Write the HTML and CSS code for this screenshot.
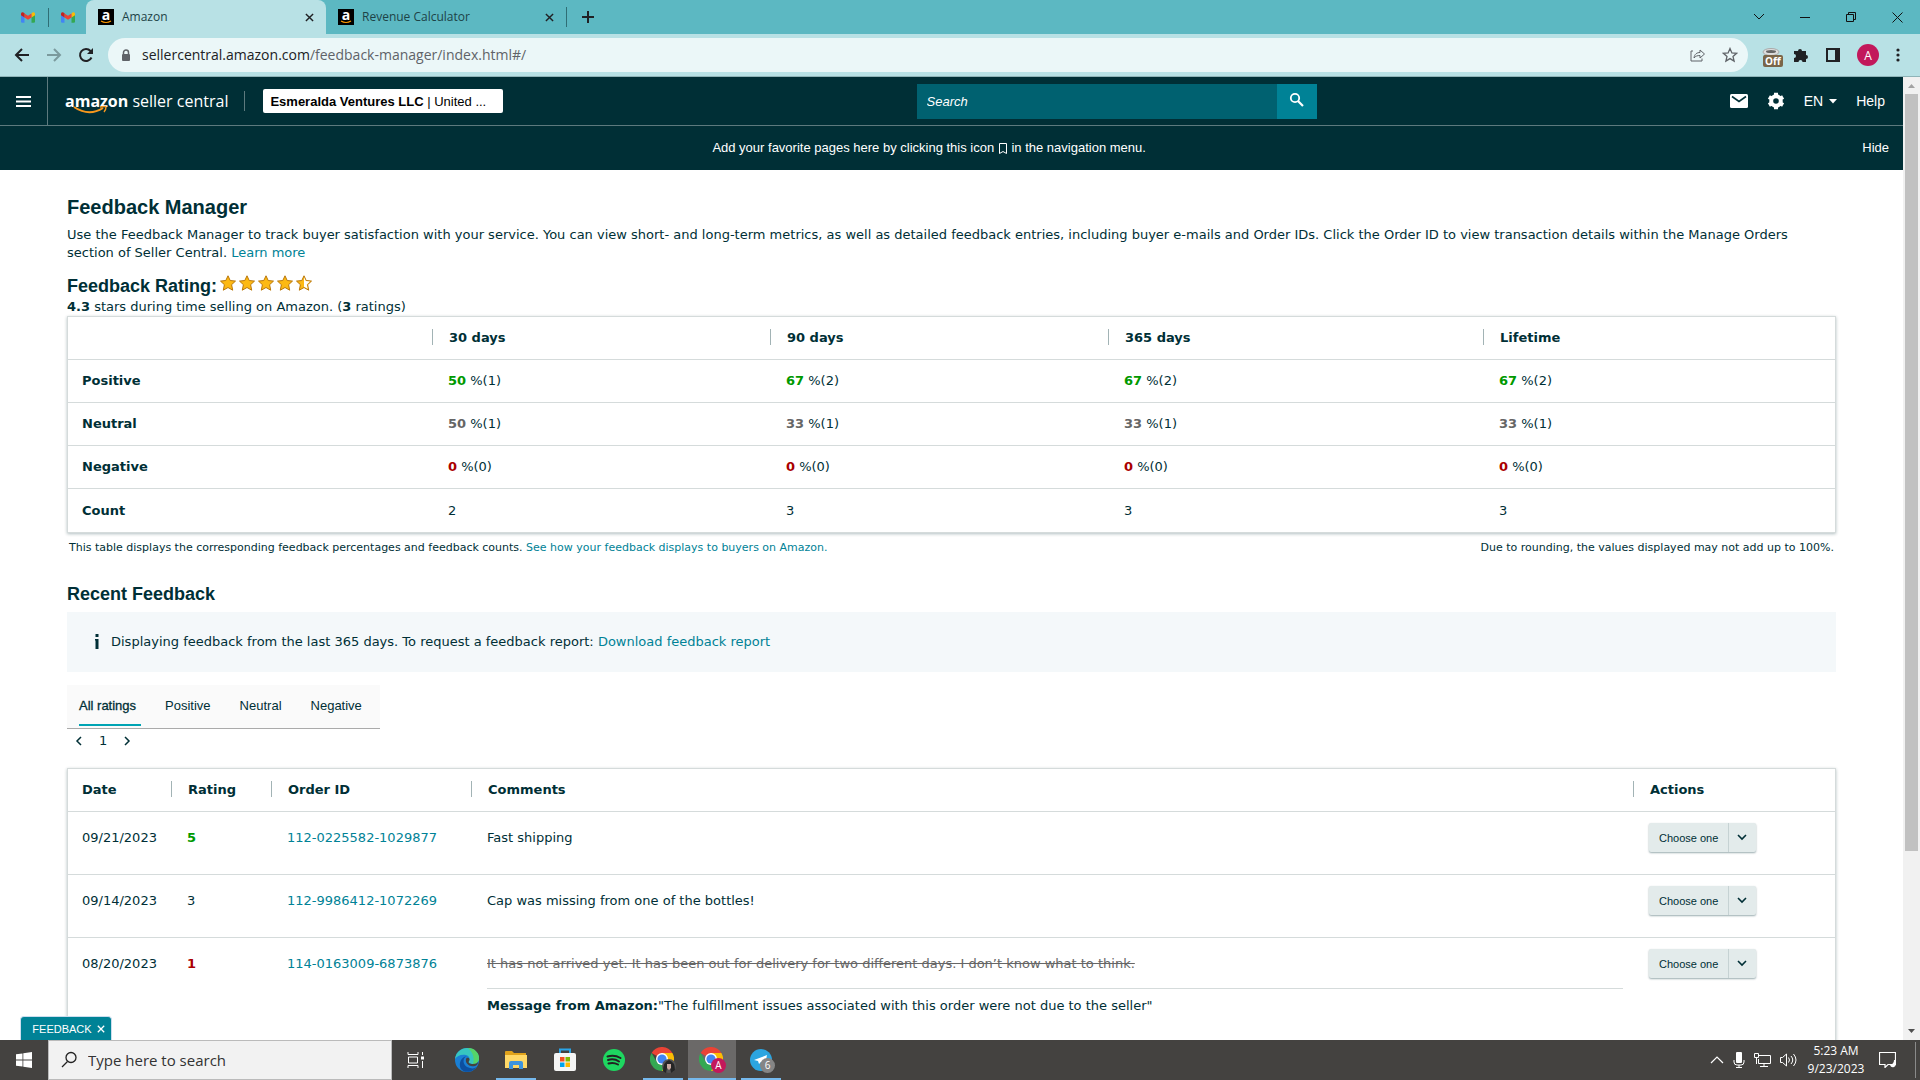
FILE: index.html
```
<!DOCTYPE html>
<html lang="en">
<head>
  <meta charset="UTF-8">
  <meta name="viewport" content="width=device-width, initial-scale=1.0">
  <title>Amazon</title>
  <link rel="stylesheet" href="styles.css">
</head>
<body>
  <svg width="0" height="0" class="defs" aria-hidden="true">
    <defs>
      <symbol id="gmail" viewBox="0 0 24 18">
        <path fill="#4285f4" d="M0 4v12a2 2 0 0 0 2 2h4V8z"/>
        <path fill="#34a853" d="M18 18h4a2 2 0 0 0 2-2V4l-6 4z"/>
        <path fill="#fbbc04" d="M18 2v7l6-4V3c0-3-3-4-5-2z"/>
        <path fill="#ea4335" d="M6 9V2l6 4 6-4v7l-6 4z"/>
        <path fill="#c5221f" d="M0 3v2l6 4V2L5 1C3-1 0 0 0 3z"/>
      </symbol>
      <symbol id="cross" viewBox="0 0 10 10">
        <path d="M1 1l8 8M9 1l-8 8" fill="none" stroke="currentColor" stroke-width="1.6"/>
      </symbol>
      <symbol id="chev-down" viewBox="0 0 12 8">
        <path d="M2 2l4 4 4-4" fill="none" stroke="currentColor" stroke-width="1.6"/>
      </symbol>
      <symbol id="star" viewBox="0 0 16 16">
        <path d="M8 .8l2.200 4.700 5.300.600-3.900 3.600 1.100 5.500L8 12.500l-4.700 2.700 1.100-5.500L.5 6.100l5.300-.6z" fill="#fdb913" stroke="#b9770b" stroke-linejoin="round"/>
      </symbol>
      <symbol id="chrome" viewBox="0 0 24 24">
        <path fill="#ea4335" d="M12 12L1.600 6a12 12 0 0 1 20.800 0z"/>
        <path fill="#fbbc04" d="M12 12V6h10.400A12 12 0 0 1 12 24z"/>
        <path fill="#34a853" d="M12 12l5.200 3L12 24A12 12 0 0 1 1.600 6L6.800 15z"/>
        <circle cx="12" cy="12" r="6" fill="#fff"/>
        <circle cx="12" cy="12" r="4.600" fill="#4285f4"/>
      </symbol>
    </defs>
  </svg>

  <!-- browser -->
  <header class="browser">
    <div class="tabstrip">
      <div class="pinned"><svg width="14" height="11"><use href="#gmail"/></svg></div>
      <div class="pinned pinned-last"><svg width="14" height="11"><use href="#gmail"/></svg></div>
      <div class="tab active">
        <span class="favicon">a<svg width="12" height="4" viewBox="0 0 12 4"><path d="M1 1q5 3 10 0" fill="none" stroke="#f90" stroke-width="1.200"/></svg></span>
        <span class="tab-title">Amazon</span>
        <button class="icon-btn" aria-label="Close tab"><svg width="9" height="9"><use href="#cross"/></svg></button>
      </div>
      <div class="tab">
        <span class="favicon">a<svg width="12" height="4" viewBox="0 0 12 4"><path d="M1 1q5 3 10 0" fill="none" stroke="#f90" stroke-width="1.200"/></svg></span>
        <span class="tab-title">Revenue Calculator</span>
        <button class="icon-btn" aria-label="Close tab"><svg width="9" height="9"><use href="#cross"/></svg></button>
      </div>
      <button class="icon-btn new-tab" aria-label="New tab"><svg width="14" height="14" viewBox="0 0 14 14"><path d="M7 1v12M1 7h12" stroke="#202124" stroke-width="2"/></svg></button>
      <div class="window-btns">
        <button class="icon-btn" aria-label="Search tabs"><svg width="12" height="8" viewBox="0 0 12 8"><path d="M1 1l5 5 5-5" fill="none" stroke="#111"/></svg></button>
        <button class="icon-btn" aria-label="Minimize"><svg width="10" height="10" viewBox="0 0 10 10"><path d="M0 5.500h10" stroke="#111"/></svg></button>
        <button class="icon-btn" aria-label="Restore"><svg width="10" height="10" viewBox="0 0 10 10"><path d="M.5 2.500h7v7h-7zM2.500 2.500v-2h7v7h-2" fill="none" stroke="#111"/></svg></button>
        <button class="icon-btn" aria-label="Close"><svg width="11" height="11" viewBox="0 0 11 11"><path d="M.5.5l10 10M10.500.5l-10 10" stroke="#111"/></svg></button>
      </div>
    </div>
    <div class="toolbar">
      <button class="icon-btn" aria-label="Back"><svg width="16" height="16" viewBox="0 0 16 16"><path d="M15 8H2M8 2L2 8l6 6" fill="none" stroke="#202124" stroke-width="2"/></svg></button>
      <button class="icon-btn" aria-label="Forward"><svg width="16" height="16" viewBox="0 0 16 16"><path d="M1 8h13M8 2l6 6-6 6" fill="none" stroke="#7b9a9d" stroke-width="2"/></svg></button>
      <button class="icon-btn" aria-label="Reload"><svg width="16" height="16" viewBox="0 0 16 16"><path d="M13.500 10.500A6 6 0 1 1 12.500 4l1 1" fill="none" stroke="#202124" stroke-width="2"/><path d="M15 1v6H9z" fill="#202124"/></svg></button>
      <div class="address">
        <svg width="10" height="13" viewBox="0 0 10 13"><path d="M2.500 5V3.500a2.500 2.500 0 0 1 5 0V5" fill="none" stroke="#5f6368" stroke-width="1.500"/><rect x="1" y="5" width="8" height="7" rx="1" fill="#5f6368"/></svg>
        <a href="#/" class="url">sellercentral.amazon.com<span>/feedback-manager/index.html#/</span></a>
        <button class="icon-btn" aria-label="Share"><svg width="16" height="14" viewBox="0 0 16 14"><path d="M3 3H1v10h11v-2.500M4 10c.5-4 3-5.500 6-5.500V2l4.500 4L10 10V7.500C7.500 7.500 5.500 8 4 10z" fill="none" stroke="#5f6368"/></svg></button>
        <button class="icon-btn" aria-label="Bookmark"><svg width="16" height="16" viewBox="0 0 16 16"><path d="M8 1.500l1.900 4.400 4.700.400-3.600 3.100 1.100 4.700L8 11.600l-4.100 2.500L5 9.400 1.400 6.300l4.700-.4z" fill="none" stroke="#5f6368" stroke-width="1.300"/></svg></button>
      </div>
      <div class="extensions">
        <button class="icon-btn ext-off" aria-label="Extension"><svg width="18" height="14" viewBox="0 0 18 14"><ellipse cx="9" cy="4" rx="8" ry="3.500" fill="#ddd" stroke="#aaa"/><ellipse cx="9" cy="3.500" rx="5" ry="1.500" fill="#666"/><path d="M3 7v5" stroke="#999" stroke-width="2"/></svg><span class="off">Off</span></button>
        <button class="icon-btn" aria-label="Extensions"><svg width="16" height="16" viewBox="0 0 16 16"><path d="M1 4h4a2 2 0 1 1 4 0h4v4a2 2 0 1 1 0 4v3H9.500a2 2 0 1 0-4 0H1v-4a2 2 0 1 0 0-4z" fill="#202124"/></svg></button>
        <button class="icon-btn" aria-label="Side panel"><svg width="14" height="14" viewBox="0 0 14 14"><path d="M1 1h12v12H1z" fill="none" stroke="#202124" stroke-width="2"/><path d="M9 1h4v12H9z" fill="#202124"/></svg></button>
        <button class="avatar">A</button>
        <button class="icon-btn" aria-label="Menu"><svg width="4" height="14" viewBox="0 0 4 14" fill="#202124"><circle cx="2" cy="2" r="1.600"/><circle cx="2" cy="7" r="1.600"/><circle cx="2" cy="12" r="1.600"/></svg></button>
      </div>
    </div>
  </header>

  <div class="viewport">
    <div class="page">
      <!-- seller central nav -->
      <nav class="topnav">
        <button class="icon-btn burger" aria-label="Open menu"><svg width="15" height="11" viewBox="0 0 15 11"><path d="M0 1h15M0 5.500h15M0 10h15" stroke="#fff" stroke-width="2"/></svg></button>
        <a href="#/" class="logo"><b>amazon</b> seller central
          <svg width="36" height="8" viewBox="0 0 36 8"><path d="M1 1q15 10 29 1" fill="none" stroke="#f7981d" stroke-width="2"/><path d="M27 1q5-1 6 0 0 3-2 5" fill="none" stroke="#f7981d" stroke-width="1.400"/></svg>
        </a>
        <button class="account"><b>Esmeralda Ventures LLC</b> | United ...</button>
        <form class="search">
          <input type="text" placeholder="Search" aria-label="Search">
          <button type="button" aria-label="Search"><svg width="16" height="16" viewBox="0 0 16 16"><circle cx="6" cy="6" r="4.200" fill="none" stroke="#fff" stroke-width="1.800"/><path d="M9 9l5 5" stroke="#fff" stroke-width="2.200"/></svg></button>
        </form>
        <div class="nav-links">
          <a href="#/" aria-label="Messages"><svg width="18" height="14" viewBox="0 0 18 14"><rect width="18" height="14" rx="1.500" fill="#fff"/><path d="M2 2.500l7 5 7-5" fill="none" stroke="#002f36" stroke-width="1.600"/></svg></a>
          <a href="#/" aria-label="Settings"><svg width="18" height="18" viewBox="0 0 18 18"><circle cx="9" cy="9" r="4.800" fill="none" stroke="#fff" stroke-width="4"/><path d="M9 .8v3M9 14.200v3M1.900 4.900l2.600 1.500M13.500 11.600l2.600 1.500M1.900 13.100l2.600-1.500M13.500 6.400l2.600-1.500" stroke="#fff" stroke-width="4"/></svg></a>
          <a href="#/" class="lang">EN <svg width="8" height="5" viewBox="0 0 8 5"><path d="M0 0h8L4 4.500z" fill="#fff"/></svg></a>
          <a href="#/">Help</a>
        </div>
      </nav>
      <div class="favbar">
        <p>Add your favorite pages here by clicking this icon <svg width="10" height="11" viewBox="0 0 10 11"><path d="M1.500.5h7v10L5 8.500l-3.500 2z" fill="none" stroke="#fff"/></svg> in the navigation menu.</p>
        <a href="#/">Hide</a>
      </div>

      <main class="content">
        <h1>Feedback Manager</h1>
        <p class="intro">Use the Feedback Manager to track buyer satisfaction with your service. You can view short- and long-term metrics, as well as detailed feedback entries, including buyer e-mails and Order IDs. Click the Order ID to view transaction details within the Manage Orders section of Seller Central. <a href="#/">Learn more</a></p>

        <h2 class="rating-title">Feedback Rating:
          <span class="stars">
            <svg width="16" height="16"><use href="#star"/></svg>
            <svg width="16" height="16"><use href="#star"/></svg>
            <svg width="16" height="16"><use href="#star"/></svg>
            <svg width="16" height="16"><use href="#star"/></svg>
            <svg width="16" height="16" viewBox="0 0 16 16"><use href="#star" width="16" height="16"/><path d="M8 2.300l1.800 3.800 4.200.500-3.200 2.800.9 4.400L8 11.700z" fill="#fff"/></svg>
          </span>
        </h2>
        <p class="summary"><b>4.3</b> stars during time selling on Amazon. (<b>3</b> ratings)</p>

        <table class="grid ratings">
          <colgroup><col class="c-label"><col class="c-30"><col class="c-90"><col class="c-365"><col></colgroup>
          <thead>
            <tr><th></th><th>30 days</th><th>90 days</th><th>365 days</th><th>Lifetime</th></tr>
          </thead>
          <tbody>
            <tr class="pos"><th>Positive</th><td><b>50</b> %(1)</td><td><b>67</b> %(2)</td><td><b>67</b> %(2)</td><td><b>67</b> %(2)</td></tr>
            <tr class="neu"><th>Neutral</th><td><b>50</b> %(1)</td><td><b>33</b> %(1)</td><td><b>33</b> %(1)</td><td><b>33</b> %(1)</td></tr>
            <tr class="neg"><th>Negative</th><td><b>0</b> %(0)</td><td><b>0</b> %(0)</td><td><b>0</b> %(0)</td><td><b>0</b> %(0)</td></tr>
            <tr><th>Count</th><td>2</td><td>3</td><td>3</td><td>3</td></tr>
          </tbody>
        </table>
        <div class="notes">
          <p>This table displays the corresponding feedback percentages and feedback counts. <a href="#/">See how your feedback displays to buyers on Amazon.</a></p>
          <p>Due to rounding, the values displayed may not add up to 100%.</p>
        </div>

        <h2 class="recent-title">Recent Feedback</h2>
        <div class="alert">
          <svg width="6" height="16" viewBox="0 0 6 16"><path d="M1.500 0h3v3h-3zM1 5h3.500v10h-3V6.500H1z" fill="#002f36"/></svg>
          <p>Displaying feedback from the last 365 days. To request a feedback report: <a href="#/">Download feedback report</a></p>
        </div>

        <div class="filters">
          <a href="#/" class="current">All ratings</a>
          <a href="#/">Positive</a>
          <a href="#/">Neutral</a>
          <a href="#/">Negative</a>
        </div>
        <div class="pager">
          <button class="icon-btn" aria-label="Previous page"><svg width="8" height="12" viewBox="0 0 8 12"><path d="M6 2L2 6l4 4" fill="none" stroke="#002f36" stroke-width="1.500"/></svg></button>
          <span>1</span>
          <button class="icon-btn" aria-label="Next page"><svg width="8" height="12" viewBox="0 0 8 12"><path d="M2 2l4 4-4 4" fill="none" stroke="#002f36" stroke-width="1.500"/></svg></button>
        </div>

        <table class="grid feedback">
          <colgroup><col class="c-date"><col class="c-rating"><col class="c-order"><col><col class="c-actions"></colgroup>
          <thead>
            <tr><th>Date</th><th>Rating</th><th>Order ID</th><th>Comments</th><th>Actions</th></tr>
          </thead>
          <tbody>
            <tr class="pos">
              <td>09/21/2023</td><td><b>5</b></td><td><a href="#/">112-0225582-1029877</a></td><td>Fast shipping</td>
              <td><div class="choose"><select aria-label="Action for 112-0225582-1029877"><option>Choose one</option></select><svg width="12" height="8"><use href="#chev-down"/></svg></div></td>
            </tr>
            <tr>
              <td>09/14/2023</td><td>3</td><td><a href="#/">112-9986412-1072269</a></td><td>Cap was missing from one of the bottles!</td>
              <td><div class="choose"><select aria-label="Action for 112-9986412-1072269"><option>Choose one</option></select><svg width="12" height="8"><use href="#chev-down"/></svg></div></td>
            </tr>
            <tr class="neg">
              <td>08/20/2023</td><td><b>1</b></td><td><a href="#/">114-0163009-6873876</a></td>
              <td><s>It has not arrived yet. It has been out for delivery for two different days. I don’t know what to think.</s>
                <p class="message"><strong>Message from Amazon:</strong>"The fulfillment issues associated with this order were not due to the seller"</p></td>
              <td><div class="choose"><select aria-label="Action for 114-0163009-6873876"><option>Choose one</option></select><svg width="12" height="8"><use href="#chev-down"/></svg></div></td>
            </tr>
          </tbody>
        </table>
      </main>
      <button class="feedback-tab">FEEDBACK <svg width="8" height="8"><use href="#cross"/></svg></button>
    </div>

    <div class="scrollbar">
      <svg width="17" height="17" viewBox="0 0 17 17"><path d="M5 11h7L8.500 7z" fill="#a3a3a3"/></svg>
      <div class="thumb"></div>
      <svg width="17" height="17" viewBox="0 0 17 17"><path d="M5 6h7l-3.500 4z" fill="#505050"/></svg>
    </div>
  </div>

  <!-- windows taskbar -->
  <footer class="taskbar">
    <button class="start" aria-label="Start"><svg width="16" height="16" viewBox="0 0 16 16" fill="#fff"><path d="M0 2.300L6.500 1.400v6.200H0zM7.300 1.300L16 0v7.600H7.300zM0 8.400h6.500v6.200L0 13.700zM7.300 8.400H16V16l-8.700-1.300z"/></svg></button>
    <label class="find">
      <svg width="18" height="18" viewBox="0 0 18 18"><circle cx="11" cy="6.500" r="5" fill="none" stroke="#222" stroke-width="1.300"/><path d="M7.500 10.500L2 16" stroke="#222" stroke-width="1.300"/></svg>
      <input type="text" placeholder="Type here to search">
    </label>
    <div class="apps">
      <button class="task-view" aria-label="Task View"><svg width="18" height="16" viewBox="0 0 18 16" fill="none" stroke="#fff"><path d="M1 0v2.500h10V0M1 16v-2.500h10V16M1.500 5h9v6h-9zM15.500 0v3M15.500 9v7"/><path d="M14 4.500h3v3h-3z" fill="#fff" stroke="none"/></svg></button>
      <button aria-label="Edge"><svg width="24" height="24" viewBox="0 0 24 24"><circle cx="12" cy="12" r="12" fill="#1a7fd4"/><path d="M0 11C1 4 6 0 12 0c7 0 12 5 12 10 0 4-3 6-6 6-3 0-5-1-4-3 1-1 1-5-3-6C6 6 2 8 0 11z" fill="#37c6c0"/><path d="M13 0c7 0 11 5 11 10 0 4-3 6-6 6 2-8-1-12-5-16z" fill="#55d469"/><path d="M12 8c-5 2-5 10 3 12 3 1 6 0 7-2-3 6-12 8-16 3C3 16 6 9 12 8z" fill="#0c4fa0"/><path d="M11.500 10c2-1 4 1 2.500 3s1 3 4 3 4-1 5-2c0 4-4 5-7 4-5-1-6-6-4.500-8z" fill="#444240"/></svg></button>
      <button class="open" aria-label="File Explorer"><svg width="22" height="18" viewBox="0 0 22 18"><path d="M0 1a1 1 0 0 1 1-1h6l2 2h12v4H0z" fill="#e0a21b"/><path d="M0 4h22v13H0z" fill="#ffd867"/><path d="M4 18v-6q0-2 2-2h10q2 0 2 2v6h-4v-4H8v4z" fill="#3d94de"/></svg></button>
      <button aria-label="Store"><svg width="22" height="24" viewBox="0 0 22 24"><path d="M6 6V1.500h10V6" fill="none" stroke="#2aa5e8" stroke-width="2"/><rect y="5" width="22" height="18" rx="2" fill="#f5f5f5"/><path fill="#f25022" d="M6 9h4.500v4.500H6z"/><path fill="#7fba00" d="M11.500 9H16v4.500h-4.500z"/><path fill="#00a4ef" d="M6 14.500h4.500V19H6z"/><path fill="#ffb900" d="M11.500 14.500H16V19h-4.500z"/></svg></button>
      <button aria-label="Spotify"><svg width="22" height="22" viewBox="0 0 22 22"><circle cx="11" cy="11" r="11" fill="#1ed760"/><path d="M4.500 7.500q7-2 13 1.500M5 11q6-2 11 1.500M5.500 14.500q5-1.500 9.500 1" fill="none" stroke="#222" stroke-width="2" stroke-linecap="round"/></svg></button>
      <button class="open" aria-label="Chrome"><svg width="26" height="26" viewBox="0 0 26 26"><use href="#chrome" width="24" height="24"/><circle cx="19" cy="19" r="7" fill="#555"/><path d="M13 24q0-9 6-11 6 2 6 10l-4 3-1-6-3 1-1 5z" fill="#262626"/><path d="M17 17h4v4l-2 2-2-2z" fill="#c9a9a0"/></svg></button>
      <button class="open focus" aria-label="Chrome profile A"><svg width="26" height="26" viewBox="0 0 26 26"><use href="#chrome" width="24" height="24"/></svg><span class="badge pink">A</span></button>
      <button class="open" aria-label="Telegram"><svg width="22" height="22" viewBox="0 0 22 22"><circle cx="11" cy="11" r="11" fill="#2ca5e0"/><path d="M4 11l13-5-2 10-4-3-2 2-1-3z" fill="#fff"/></svg><span class="badge grey">6</span></button>
    </div>
    <div class="tray">
      <svg width="14" height="8" viewBox="0 0 14 8"><path d="M1 7l6-6 6 6" fill="none" stroke="#fff" stroke-width="1.200"/></svg>
      <svg width="12" height="16" viewBox="0 0 12 16"><rect x="3" width="6" height="11" rx="1" fill="#fff"/><path d="M1 8v2q0 3 3 3h4q3 0 3-3V8M6 13v2.500M3 15.500h6" fill="none" stroke="#fff"/></svg>
      <svg width="17" height="14" viewBox="0 0 17 14" fill="none" stroke="#fff"><path d="M5 2.500h11.500v8H4.500V6M10 11v2.500M6 13.500h8M.5.500h4v4h-4zM2.500 5v6"/></svg>
      <svg width="17" height="14" viewBox="0 0 17 14" fill="none" stroke="#fff"><path d="M.5 4.500h2l4-3.500v12L2.500 9.500h-2zM8.500 4.500q2 2.500 0 5M11 3q3.500 4 0 8M13.500 1q5 6 0 12"/></svg>
      <div class="clock"><div>5:23 AM</div><div>9/23/2023</div></div>
      <svg width="17" height="16" viewBox="0 0 17 16"><path d="M.5.500h16v12H9l-3 3v-3H.5z" fill="none" stroke="#fff" stroke-width="1.200"/><path d="M15 8q0 4-4 5 1 3 4 2t1-7z" fill="#fff"/></svg>
    </div>
  </footer>
</body>
</html>
```

FILE: styles.css
```
* {
  box-sizing: border-box;
}
body {
  margin: 0;
  height: 100vh;
  display: flex;
  flex-direction: column;
  overflow: hidden;
  font-family: "DejaVu Sans", Verdana, sans-serif;
  font-size: 13px;
  line-height: 18px;
  color: #002f36;
  background: #fff;
}
h1, h2, p {
  margin: 0;
}
a {
  color: #008296;
  text-decoration: none;
}
button, input, select {
  font-family: inherit;
  border: 0;
  padding: 0;
  margin: 0;
  background: none;
}
svg {
  flex: none;
}
.defs {
  position: absolute;
}
.icon-btn {
  display: flex;
  align-items: center;
  justify-content: center;
  color: #202124;
}

/* browser */
.browser {
  flex: none;
  font-family: "Open Sans", "Noto Sans", sans-serif;
  background: #5cb8c2;
}
.tabstrip {
  display: flex;
  align-items: center;
  height: 34px;
  font-size: 12px;
}
.pinned {
  display: flex;
  justify-content: center;
  width: 49px;
  padding: 4px 0 4px 8px;
  border-right: 1px solid #2f6e75;
}
.pinned-last {
  width: 37px;
  padding-left: 0;
  border: 0;
}
.tab {
  display: flex;
  align-items: center;
  gap: 8px;
  width: 240px;
  height: 34px;
  padding: 0 12px;
  color: #1d4347;
}
.tab.active {
  background: #b8e1e5;
  border-radius: 8px 8px 0 0;
}
.tab-title {
  flex: 1;
}
.favicon {
  display: flex;
  flex-direction: column;
  align-items: center;
  width: 16px;
  height: 16px;
  background: #000;
  color: #fff;
  font-weight: bold;
  font-size: 14px;
  line-height: 11px;
}
.new-tab {
  height: 20px;
  padding-left: 14px;
  border-left: 1px solid #2f6e75;
}
.window-btns {
  display: flex;
  margin-left: auto;
}
.window-btns .icon-btn {
  width: 46px;
  height: 28px;
}
.toolbar {
  display: flex;
  align-items: center;
  height: 43px;
  padding: 0 20px 0 14px;
  gap: 16px;
  background: #b8e1e5;
  border-bottom: 1px solid #8fb4b8;
}
.address {
  flex: 1;
  display: flex;
  align-items: center;
  gap: 16px;
  height: 34px;
  margin-left: -2px;
  padding: 0 10px 0 13px;
  border-radius: 17px;
  background: #ebf7f8;
}
.url {
  flex: 1;
  margin-left: -5px;
  font-size: 14px;
  color: #202124;
}
.url span {
  color: #5f6368;
}
.extensions {
  display: flex;
  align-items: center;
  gap: 17px;
  margin-left: -4px;
}
.ext-off {
  position: relative;
  width: 22px;
  height: 22px;
  margin-right: -6px;
}
.off {
  position: absolute;
  left: 3px;
  top: 11px;
  padding: 0 2px;
  border-radius: 2px;
  background: #7a6548;
  color: #fff;
  font: bold 10px/12px "Open Sans", sans-serif;
}
.avatar {
  width: 22px;
  height: 22px;
  border-radius: 50%;
  background: #c2185b;
  color: #fff;
  font-size: 12px;
}

/* page area */
.viewport {
  flex: 1;
  min-height: 0;
  display: flex;
}
.page {
  position: relative;
  flex: 1;
  overflow: hidden;
}
.scrollbar {
  width: 17px;
  display: flex;
  flex-direction: column;
  background: #f1f1f1;
}
.thumb {
  flex: 0 0 calc(100% * 11 / 14);
  margin: 0 2px auto;
  background: #c1c1c1;
}

.topnav {
  display: flex;
  align-items: center;
  height: 49px;
  border-bottom: 1px solid #5d7a7e;
  background: #002f36;
  font-family: "Liberation Sans", Arial, sans-serif;
  color: #fff;
}
.burger {
  width: 48px;
  height: 48px;
  border-right: 1px solid #5d7a7e;
}
.logo {
  position: relative;
  margin-left: 17px;
  padding-right: 16px;
  border-right: 1px solid #5d7a7e;
  font-family: "Open Sans", sans-serif;
  font-size: 16px;
  line-height: 20px;
  color: #fff;
}
.logo svg {
  position: absolute;
  left: 8px;
  top: 15px;
}
.account {
  width: 240px;
  height: 24px;
  margin-left: 18px;
  padding-left: 7px;
  border-radius: 2px;
  background: #fff;
  color: #000;
  font-size: 13px;
  text-align: left;
}
.search {
  display: flex;
  width: 400px;
  height: 35px;
  margin: 0 auto;
}
.search input {
  flex: 1;
  padding: 0 10px;
  background: #006170;
  font-size: 13px;
}
.search input::placeholder {
  color: #fff;
  font-style: italic;
  opacity: 1;
}
.search button {
  width: 40px;
  background: #008296;
}
.nav-links {
  display: flex;
  align-items: center;
  gap: 19px;
  padding-right: 18px;
  font-size: 14px;
}
.nav-links a {
  display: flex;
  align-items: center;
  gap: 6px;
  color: #fff;
}
.favbar {
  display: flex;
  align-items: center;
  height: 44px;
  padding: 0 14px;
  background: #002f36;
  color: #fff;
  font-family: "Liberation Sans", Arial, sans-serif;
}
.favbar p {
  flex: 1;
  padding-right: 18px;
  text-align: center;
}
.favbar p svg {
  vertical-align: -2px;
}
.favbar a {
  color: #fff;
}

/* feedback manager */
.content {
  padding: 24px 67px 0;
}
h1, h2 {
  font-family: "Liberation Sans", Arial, sans-serif;
  font-size: 18px;
  line-height: 26px;
}
h1 {
  font-size: 20px;
}
.intro {
  margin-top: 6px;
}
.rating-title {
  display: flex;
  gap: 3px;
  margin-top: 13px;
  line-height: 23px;
}
.stars {
  display: flex;
  gap: 3px;
}
.grid {
  width: 100%;
  table-layout: fixed;
  border-collapse: separate;
  border-spacing: 0;
  border: 1px solid #d5dbdb;
  box-shadow: 0 1px 3px rgba(0, 47, 54, 0.3);
}
.grid th {
  position: relative;
  text-align: left;
}
.grid th, .grid td {
  height: 43px;
  padding: 0 14px;
  border-bottom: 1px solid #d5dbdb;
}
.grid tr > * + * {
  padding-left: 16px;
}
.grid thead th + th {
  padding-left: 17px;
}
.grid tbody tr:last-child > * {
  border-bottom: 0;
}
.grid thead th + th::before {
  content: "";
  position: absolute;
  left: 0;
  top: 12px;
  height: 16px;
  border-left: 1px solid #a2b3b5;
}
.c-label {
  width: 364px;
}
.c-30, .c-90 {
  width: 338px;
}
.c-365 {
  width: 375px;
}
.pos b {
  color: #090;
}
.neu b {
  color: #666;
}
.neg b {
  color: #a00;
}
.notes {
  display: flex;
  justify-content: space-between;
  padding: 6px 2px 0;
  font-size: 11px;
}
.recent-title {
  margin-top: 24px;
}
.alert {
  display: flex;
  align-items: center;
  gap: 11px;
  height: 60px;
  margin-top: 5px;
  padding-left: 27px;
  background: #f4f8fa;
}
.filters {
  display: inline-flex;
  gap: 24px;
  height: 44px;
  margin-top: 13px;
  padding: 0 13px 0 12px;
  border-bottom: 1px solid #aaa;
  background: #fafafa;
  font-family: "Liberation Sans", Arial, sans-serif;
  vertical-align: top;
}
.filters a {
  height: 41px;
  padding: 12px 5px 0 0;
  color: #002f36;
}
.filters .current {
  border-bottom: 2px solid #00a4b4;
  -webkit-text-stroke: 0.3px;
}
.pager {
  display: flex;
  align-items: center;
  gap: 16px;
  height: 24px;
  padding-left: 8px;
}
.feedback {
  margin-top: 15px;
}
.feedback tbody td {
  height: 63px;
  padding-top: 11px;
  line-height: 29px;
  vertical-align: top;
}
.c-date {
  width: 103px;
}
.c-rating {
  width: 100px;
}
.c-order {
  width: 200px;
}
.c-actions {
  width: 202px;
}
s {
  color: #666;
}
.message {
  padding: 8px 0 30px;
  margin-top: 10px;
  border-top: 1px solid #d5dbdb;
  line-height: 18px;
}
.feedback td:nth-child(4) {
  padding-right: 10px;
}
.choose {
  position: relative;
  width: 107px;
}
.choose select {
  display: block;
  width: 100%;
  height: 29px;
  padding: 0 36px 0 10px;
  border-radius: 2px;
  appearance: none;
  background: linear-gradient(#c6d2d3, #c6d2d3) 79px 0 / 1px 100% no-repeat #e3ebeb;
  box-shadow: 0 1px 2px rgba(0, 47, 54, 0.4);
  color: #002f36;
  font-family: "Liberation Sans", Arial, sans-serif;
  font-size: 11px;
}
.choose svg {
  position: absolute;
  right: 8px;
  top: 10px;
  pointer-events: none;
}
.feedback-tab {
  position: absolute;
  left: 20px;
  bottom: 0;
  display: flex;
  align-items: center;
  justify-content: center;
  gap: 5px;
  width: 92px;
  height: 24px;
  padding-left: 5px;
  border: 1px solid #cde;
  border-bottom: 0;
  border-radius: 4px 4px 0 0;
  background: #008296;
  color: #fff;
  font-family: "Liberation Sans", Arial, sans-serif;
  font-size: 11px;
}

/* taskbar */
.taskbar {
  flex: none;
  display: flex;
  align-items: center;
  height: 40px;
  background: #444240;
  color: #fff;
  font-family: "Open Sans", "Noto Sans", sans-serif;
}
.start {
  width: 48px;
  height: 40px;
  padding-top: 4px;
}
.find {
  display: flex;
  align-items: center;
  gap: 10px;
  width: 344px;
  height: 40px;
  padding-left: 11px;
  border: 1px solid #bbb;
  background: #f2f2f2;
}
.find input {
  flex: 1;
  font-size: 15px;
}
.find input::placeholder {
  color: #333;
  opacity: 1;
}
.apps {
  display: flex;
  gap: 1px;
}
.apps button {
  position: relative;
  display: flex;
  align-items: center;
  justify-content: center;
  width: 48px;
  height: 40px;
}
.apps .task-view {
  margin-right: 2px;
}
.apps .open::after {
  content: "";
  position: absolute;
  left: 4px;
  right: 4px;
  bottom: 0;
  height: 2px;
  background: #76b9ed;
}
.apps .focus {
  background: #6b6968;
}
.apps .focus::after {
  left: 0;
  right: 0;
}
.badge {
  position: absolute;
  left: 23px;
  top: 18px;
  width: 15px;
  height: 15px;
  border-radius: 50%;
  font-size: 10px;
  line-height: 15px;
  color: #fff;
}
.pink {
  background: #c2185b;
}
.grey {
  background: #858585;
}
.tray {
  display: flex;
  align-items: center;
  gap: 9px;
  margin-left: auto;
  margin-right: 4px;
  padding-right: 19px;
  border-right: 1px solid #8a8a8a;
}
.clock {
  width: 60px;
  margin-right: 4px;
  text-align: center;
  font-size: 12px;
}
```
